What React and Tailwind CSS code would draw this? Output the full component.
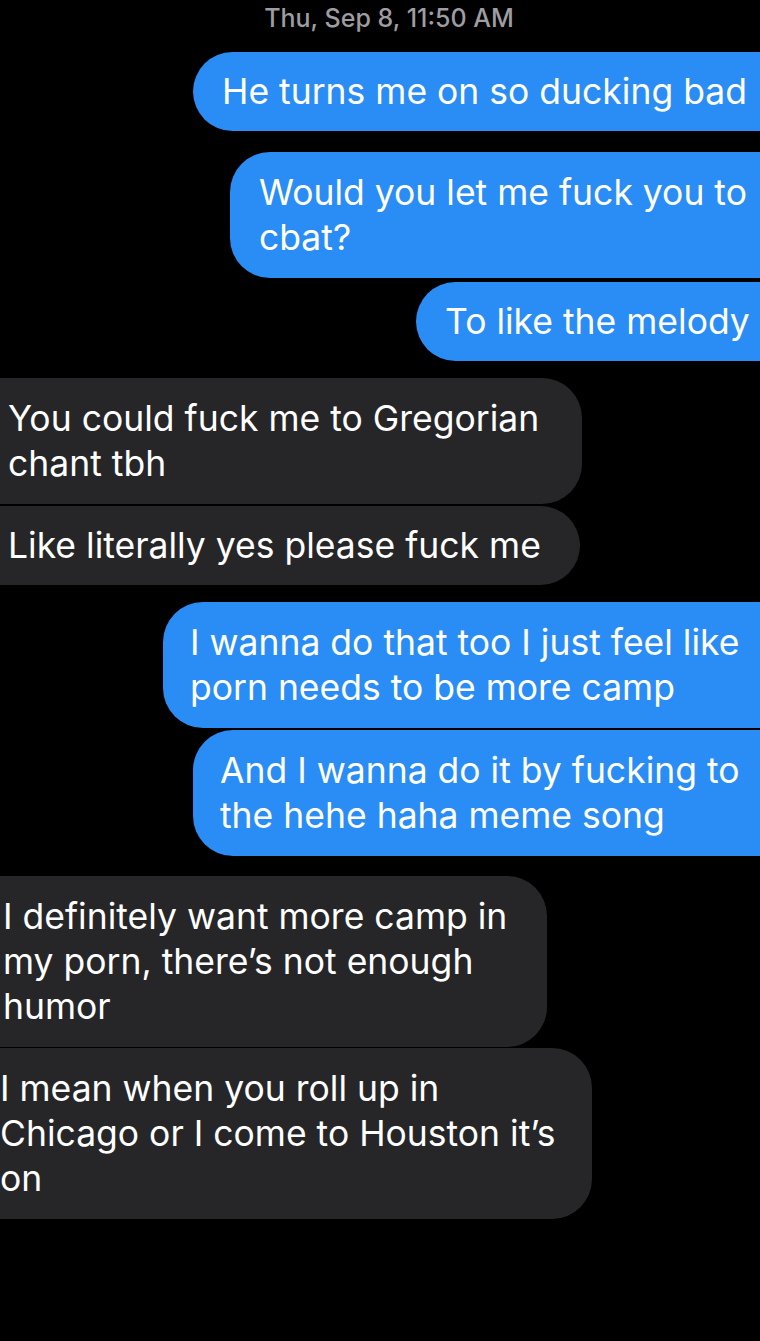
import React from "react";

const font = { fontFamily: "Inter, 'Noto Sans', sans-serif" };

// Outgoing message: blue bubble running off the right edge
function Sent({ cls, children }) {
  return (
    <div className="flex">
      <div
        className={`flex-1 rounded-[40px] bg-[#2a8df5] pr-[40px] mr-[-60px] text-white text-[35.5px] leading-[45px] whitespace-nowrap ${cls}`}
      >
        {children}
      </div>
    </div>
  );
}

// Incoming message: dark bubble running off the left edge
function Received({ cls, children }) {
  return (
    <div className="flex">
      <div
        className={`ml-[-40px] rounded-[40px] bg-[#262629] text-white text-[35.5px] leading-[45px] whitespace-nowrap ${cls}`}
      >
        {children}
      </div>
    </div>
  );
}

export default function App() {
  return (
    <div className="w-[760px] min-h-[1341px] bg-black overflow-hidden" style={font}>
      <div className="h-[52px] pt-[2px] pl-[18px] text-center text-[25px] leading-[32px] font-medium text-[#9d9da2]">
        Thu, Sep 8, 11:50 AM
      </div>

      <Sent cls="ml-[193px] pl-[29px] py-[17px]">He turns me on so ducking bad</Sent>
      <Sent cls="ml-[230px] pl-[29px] py-[18px] mt-[21px]">
        Would you let me fuck you to
        <br />
        cbat?
      </Sent>
      <Sent cls="ml-[416px] pl-[29px] py-[17px] mt-[4px]">To like the melody</Sent>

      <Received cls="w-[622px] pl-[48px] py-[18px] mt-[17px]">
        You could fuck me to Gregorian
        <br />
        chant tbh
      </Received>
      <Received cls="w-[620px] pl-[48px] py-[17px] mt-[2px]">
        Like literally yes please fuck me
      </Received>

      <Sent cls="ml-[163px] pl-[27px] py-[18px] mt-[17px]">
        I wanna do that too I just feel like
        <br />
        porn needs to be more camp
      </Sent>
      <Sent cls="ml-[193px] pl-[27px] py-[18px] mt-[2px]">
        And I wanna do it by fucking to
        <br />
        the hehe haha meme song
      </Sent>

      <Received cls="w-[587px] pl-[43px] py-[18px] mt-[20px]">
        I definitely want more camp in
        <br />
        my porn, there’s not enough
        <br />
        humor
      </Received>
      <Received cls="w-[632px] pl-[40px] py-[18px] mt-[1px]">
        I mean when you roll up in
        <br />
        Chicago or I come to Houston it’s
        <br />
        on
      </Received>
    </div>
  );
}
